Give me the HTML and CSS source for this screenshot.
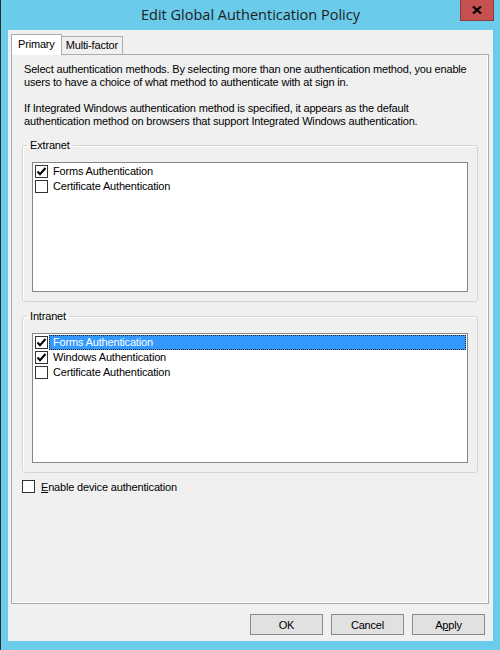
FILE: index.html
```html
<!DOCTYPE html>
<html>
<head>
<meta charset="utf-8">
<link rel="stylesheet" href="styles.css">
</head>
<body>
<div class="window">
  <div class="titlebar">
    <div class="title">Edit Global Authentication Policy</div>
    <div class="close">
      <svg width="10" height="8" viewBox="0 0 10 8"><path d="M1 0.5 L9 7.5 M9 0.5 L1 7.5" stroke="#000" stroke-width="2.2" fill="none"/></svg>
    </div>
  </div>
  <div class="client">
    <div class="tabs">
      <div class="tab active">Primary</div>
      <div class="tab">Multi-factor</div>
    </div>
    <div class="panel">
      <p class="desc">Select authentication methods. By selecting more than one authentication method, you enable<br>users to have a choice of what method to authenticate with at sign in.</p>
      <p class="desc desc-last">If Integrated Windows authentication method is specified, it appears as the default<br>authentication method on browsers that support Integrated Windows authentication.</p>
      <fieldset class="group">
        <legend>Extranet</legend>
        <div class="listbox">
          <div class="item"><span class="cb"><svg width="11" height="11" viewBox="0 0 11 11"><path d="M1.5 5.5 L4 8.2 L9.5 2" stroke="#000" stroke-width="2" fill="none"/></svg></span><span class="item-label">Forms Authentication</span></div>
          <div class="item"><span class="cb"></span><span class="item-label">Certificate Authentication</span></div>
        </div>
      </fieldset>
      <fieldset class="group group-second">
        <legend>Intranet</legend>
        <div class="listbox">
          <div class="item selected"><span class="cb"><svg width="11" height="11" viewBox="0 0 11 11"><path d="M1.5 5.5 L4 8.2 L9.5 2" stroke="#000" stroke-width="2" fill="none"/></svg></span><span class="item-label">Forms Authentication</span></div>
          <div class="item"><span class="cb"><svg width="11" height="11" viewBox="0 0 11 11"><path d="M1.5 5.5 L4 8.2 L9.5 2" stroke="#000" stroke-width="2" fill="none"/></svg></span><span class="item-label">Windows Authentication</span></div>
          <div class="item"><span class="cb"></span><span class="item-label">Certificate Authentication</span></div>
        </div>
      </fieldset>
      <div class="device"><span class="cb"></span><span><u>E</u>nable device authentication</span></div>
    </div>
    <div class="buttons">
      <div class="btn">OK</div>
      <div class="btn">Cancel</div>
      <div class="btn">A<u>p</u>ply</div>
    </div>
  </div>
</div>
</body>
</html>
```
FILE: styles.css
```css
* { box-sizing: border-box; }
html, body { margin: 0; padding: 0; }
body {
  width: 500px;
  height: 650px;
  overflow: hidden;
  font-family: "Liberation Sans", Arial, sans-serif;
  font-size: 11px;
  letter-spacing: -0.17px;
  color: #000;
}
.window {
  width: 500px;
  height: 650px;
  background: #6bcbea;
  border-left: 1px solid #2b2b2b;
  display: flex;
  flex-direction: column;
}
.titlebar {
  height: 30px;
  flex: none;
  display: grid;
  grid-template-columns: 1fr auto 1fr;
}
.title {
  grid-column: 2;
  font-family: "Open Sans", sans-serif;
  font-size: 14.5px;
  letter-spacing: 0;
  line-height: 30px;
  color: #1e1e1e;
  white-space: nowrap;
}
.close {
  grid-column: 3;
  justify-self: end;
  align-self: start;
  width: 34px;
  height: 21px;
  margin-right: 6px;
  background: #c75050;
  border: 1px solid #8d3b38;
  border-top: none;
  display: flex;
  align-items: center;
  justify-content: center;
}
.client {
  flex: 1;
  margin: 0 7px 9px 7px;
  background: #f0f0f0;
  padding: 4px 4px 6px 3px;
  display: flex;
  flex-direction: column;
}
.tabs {
  display: flex;
  height: 20px;
  flex: none;
  position: relative;
  z-index: 1;
}
.tab {
  height: 18px;
  margin-top: 2px;
  padding: 0 4px;
  border: 1px solid #acacac;
  border-bottom: none;
  border-left: none;
  background: #f0f0f0;
  line-height: 17px;
}
.tab.active {
  height: 21px;
  margin-top: 0;
  border-left: 1px solid #acacac;
  background: #fff;
  padding: 0 6px;
  line-height: 19px;
}
.panel {
  flex: none;
  height: 550px;
  border: 1px solid #acacac;
  background: #f0f0f0;
  padding: 8px 10px 0;
  box-shadow: inset -1px -1px 0 #fff;
}
.desc {
  margin: 0 0 13px;
  padding-left: 2px;
  line-height: 13px;
  white-space: nowrap;
}
.desc-last { margin-bottom: 0; }
.group {
  margin: 11px 0 0;
  padding: 10px 9px 9px;
  border: 1px solid #d5d5d5;
  border-radius: 3px;
  box-shadow: inset 1px 1px 0 #fff;
  min-width: 0;
}
.group-second { margin-top: 8px; }
.group legend {
  padding: 0 3px;
  margin-left: -5px;
  line-height: 13px;
}
.listbox {
  height: 130px;
  border: 1px solid #828790;
  background: #fff;
  padding: 1px 1px 0;
}
.item {
  display: flex;
  align-items: center;
  height: 15px;
}
.cb {
  width: 13px;
  height: 13px;
  flex: none;
  border: 1px solid #333;
  background: #fff;
  margin-left: 1px;
  display: flex;
}
.item-label {
  flex: 1;
  height: 15px;
  line-height: 15px;
  margin-left: 1px;
  padding-left: 4px;
  white-space: nowrap;
}
.item.selected .item-label {
  background: #3399ff;
  color: #fff;
  outline: 1px dotted #222;
  outline-offset: -1px;
}
.device {
  display: flex;
  align-items: center;
  gap: 6px;
  margin-top: 7px;
  margin-left: -1px;
}
.buttons {
  display: flex;
  justify-content: flex-end;
  gap: 8px;
  margin-top: 10px;
  padding-right: 4px;
  flex: none;
}
.btn {
  width: 73px;
  height: 21px;
  background: #e1e1e1;
  border: 1px solid #8a8a8a;
  display: flex;
  align-items: center;
  justify-content: center;
}
```
